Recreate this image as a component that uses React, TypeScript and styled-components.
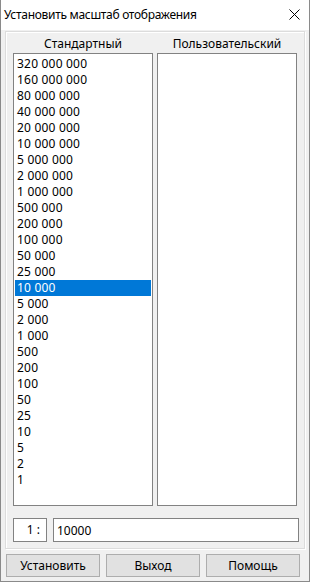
import styled, { createGlobalStyle } from 'styled-components';

const GlobalStyle = createGlobalStyle`
  html, body {
    margin: 0;
    padding: 0;
    background: #f0f0f0;
  }
  * {
    box-sizing: border-box;
  }
`;

const scales = [
  '320 000 000',
  '160 000 000',
  '80 000 000',
  '40 000 000',
  '20 000 000',
  '10 000 000',
  '5 000 000',
  '2 000 000',
  '1 000 000',
  '500 000',
  '200 000',
  '100 000',
  '50 000',
  '25 000',
  '10 000',
  '5 000',
  '2 000',
  '1 000',
  '500',
  '200',
  '100',
  '50',
  '25',
  '10',
  '5',
  '2',
  '1',
];

const App = () => {
  return (
    <>
      <GlobalStyle />
      <Window>
        <TitleBar>
          <Title>Установить масштаб отображения</Title>
          <CloseButton aria-label="Закрыть">
            <svg width="11" height="11" viewBox="0 0 11 11">
              <path d="M0.5 0.5 L10.5 10.5 M10.5 0.5 L0.5 10.5" stroke="#000" strokeWidth="1" fill="none" />
            </svg>
          </CloseButton>
        </TitleBar>
        <Body>
          <Group>
            <Columns>
              <Column>
                <ColumnHeader>Стандартный</ColumnHeader>
                <ListBox>
                  {scales.map((s) => (
                    <ListItem key={s} $selected={s === '10 000'}>
                      {s}
                    </ListItem>
                  ))}
                </ListBox>
              </Column>
              <Column>
                <ColumnHeader>Пользовательский</ColumnHeader>
                <ListBox />
              </Column>
            </Columns>
            <ScaleRow>
              <Prefix>1 :</Prefix>
              <ScaleInput defaultValue="10000" />
            </ScaleRow>
          </Group>
          <ButtonRow>
            <Button>Установить</Button>
            <Button>Выход</Button>
            <Button>Помощь</Button>
          </ButtonRow>
        </Body>
      </Window>
    </>
  );
};

export default App;

const Window = styled.div`
  width: 310px;
  height: 582px;
  display: flex;
  flex-direction: column;
  background: #f0f0f0;
  border: 1px solid #8a8a8a;
  border-top: none;
  font-family: 'Noto Sans', 'Segoe UI', sans-serif;
  font-size: 12px;
  color: #000;
`;

const TitleBar = styled.div`
  height: 30px;
  flex: none;
  display: flex;
  align-items: center;
  justify-content: space-between;
  background: #fff;
  padding: 0 8px 0 3px;
`;

const Title = styled.div`
  font-size: 12px;
  line-height: 16px;
  letter-spacing: -0.3px;
  padding-bottom: 1px;
`;

const CloseButton = styled.div`
  width: 13px;
  height: 13px;
  display: flex;
  align-items: center;
  justify-content: center;
  margin-bottom: 1px;
`;

const Body = styled.div`
  flex: 1;
  display: flex;
  flex-direction: column;
  padding: 1px 4px 4px 4px;
  gap: 5px;
`;

const Group = styled.div`
  height: 518px;
  display: flex;
  flex-direction: column;
  border: 1px solid #dcdcdc;
  box-shadow: inset 1px 1px 0 #fff, 1px 1px 0 #fff;
`;

const Columns = styled.div`
  display: grid;
  grid-template-columns: 140px 140px;
  gap: 4px;
  padding: 0 7px;
`;

const Column = styled.div`
  display: flex;
  flex-direction: column;
`;

const ColumnHeader = styled.div`
  height: 21px;
  line-height: 16px;
  padding-top: 4px;
  text-align: center;
`;

const ListBox = styled.div`
  height: 453px;
  background: #fff;
  border: 1px solid #828282;
  padding: 2px 1px;
  overflow: hidden;
`;

const ListItem = styled.div<{ $selected?: boolean }>`
  height: 16px;
  line-height: 16px;
  padding-left: 2px;
  letter-spacing: 0.2px;
  white-space: nowrap;
  background: ${(p) => (p.$selected ? '#0078d7' : 'transparent')};
  color: ${(p) => (p.$selected ? '#fff' : '#000')};
`;

const ScaleRow = styled.div`
  display: flex;
  gap: 6px;
  margin-top: 12px;
  padding: 0 5px 0 7px;
`;

const Prefix = styled.div`
  width: 34px;
  height: 24px;
  background: #fff;
  border: 1px solid #828282;
  line-height: 22px;
  text-align: right;
  padding-right: 6px;
`;

const ScaleInput = styled.input`
  flex: 1;
  height: 24px;
  min-width: 0;
  background: #fff;
  border: 1px solid #828282;
  padding: 0 3px;
  font-family: 'Noto Sans', 'Segoe UI', sans-serif;
  font-size: 12px;
  color: #000;
  outline: none;
`;

const ButtonRow = styled.div`
  display: grid;
  grid-template-columns: repeat(3, 94px);
  gap: 6px;
  padding-left: 1px;
`;

const Button = styled.button`
  height: 23px;
  background: #e1e1e1;
  border: 1px solid #adadad;
  padding: 0;
  font-family: 'Noto Sans', 'Segoe UI', sans-serif;
  font-size: 12px;
  color: #000;
  line-height: 16px;
`;
